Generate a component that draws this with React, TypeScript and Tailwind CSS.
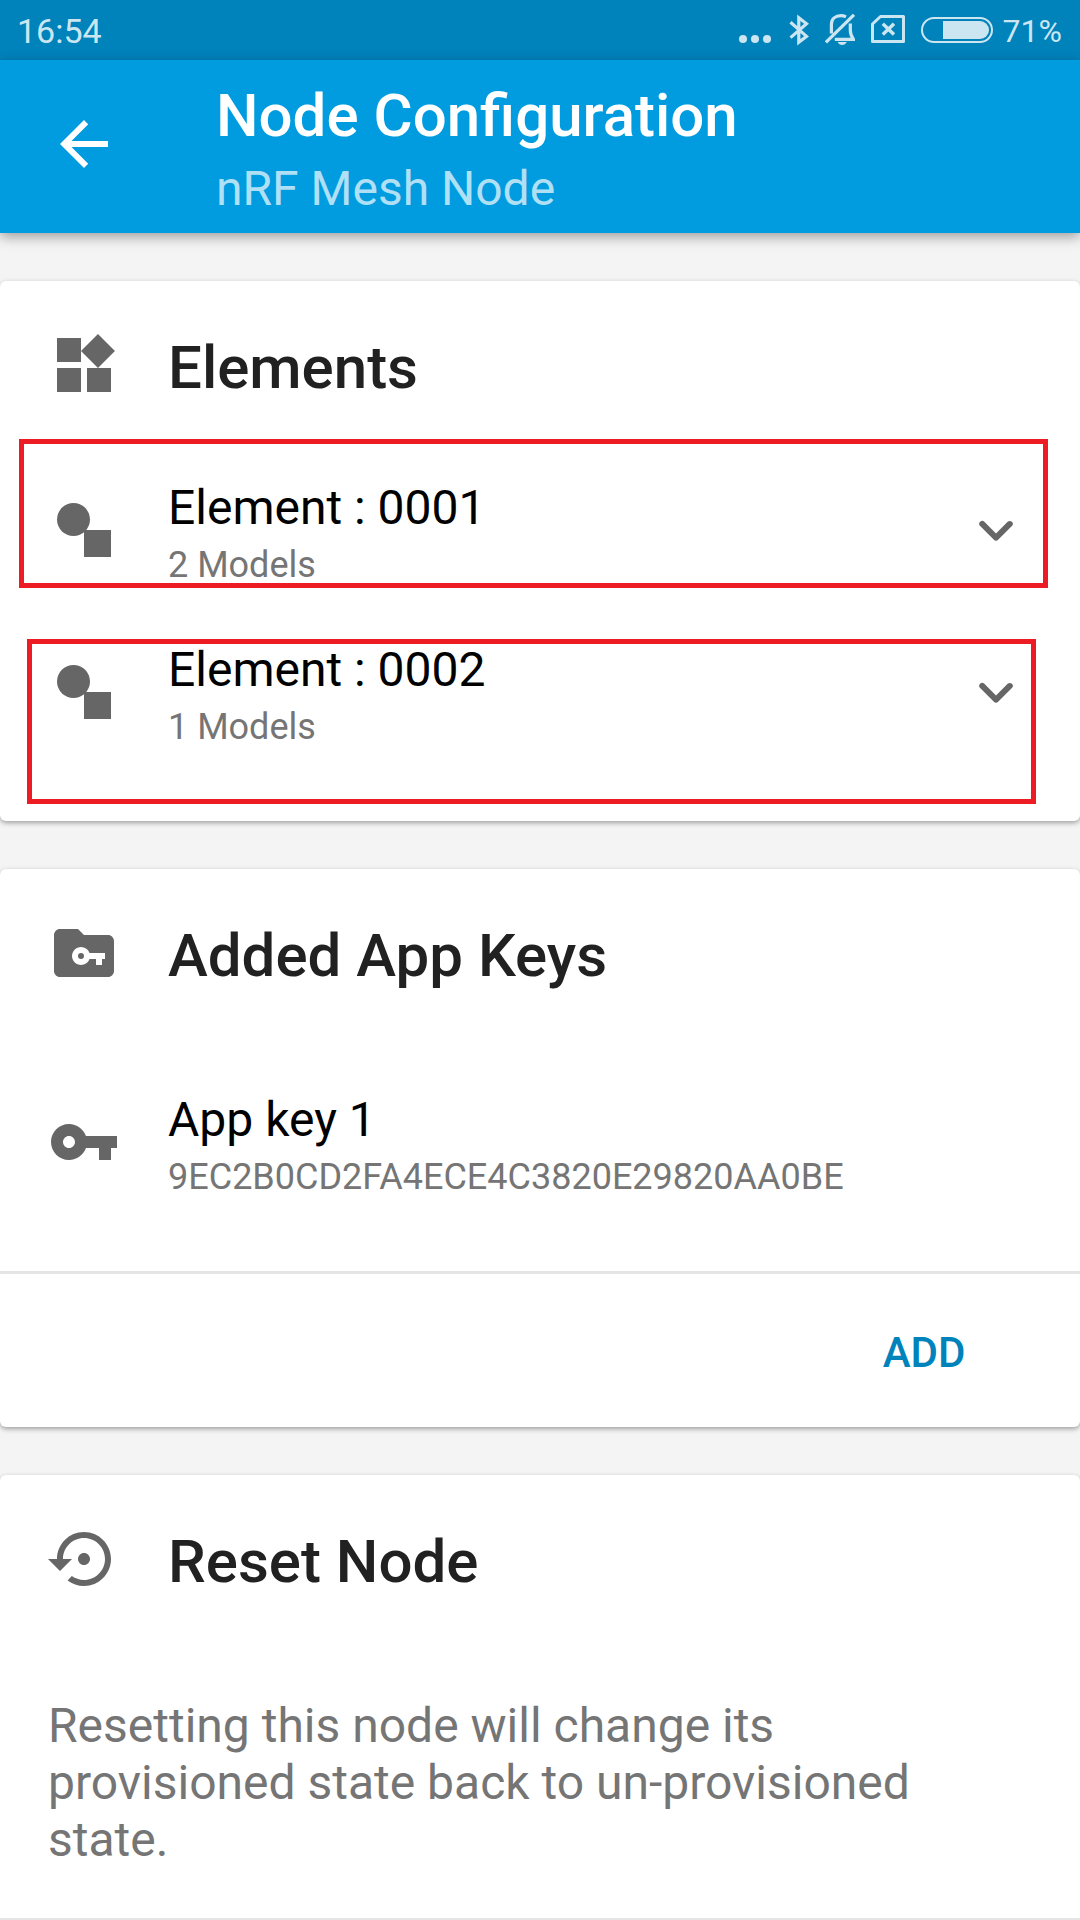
import type { ReactNode } from "react";

function Icon({ children }: { children: ReactNode }) {
  return (
    <svg viewBox="0 0 24 24" className="size-[72px] shrink-0" fill="currentColor" aria-hidden="true">
      {children}
    </svg>
  );
}

function StatusBar() {
  return (
    <div className="flex h-[60px] items-center justify-between bg-[#0082bb] pr-[18px] pl-[17px] text-[#cce6f1]">
      <span className="pt-0.5 text-[34px]">16:54</span>
      <div className="flex items-center gap-4">
        <svg width="34" height="32" viewBox="0 0 34 32" fill="currentColor" aria-hidden="true">
          <circle cx="4" cy="25" r="4" />
          <circle cx="16" cy="25" r="4" />
          <circle cx="28" cy="25" r="4" />
        </svg>
        <svg width="20" height="32" viewBox="0 0 20 32" fill="none" stroke="currentColor" strokeWidth="3.200" aria-hidden="true">
          <path d="M1.500 8.200 17.600 22.400 9.800 28.200V3.800L17.600 9.800 1.500 23.600" />
        </svg>
        <svg width="30" height="32" viewBox="0 0 30 32" fill="none" stroke="currentColor" strokeWidth="3.200" aria-hidden="true">
          <path d="M29 .8.9 28.400" />
          <path d="M6.400 19.600V10.400C6.400 5 10.500 1.700 16 1.700c2 0 3.600.5 5 1.200" />
          <path d="M25.300 9.500V16c0 3.600 1.200 6.800 3.200 9.400H9.800" />
          <path d="M12.600 28h9.200c-1 2-2.600 3-4.600 3s-3.600-1-4.600-3z" fill="currentColor" stroke="none" />
        </svg>
        <svg width="34" height="32" viewBox="0 0 34 32" fill="none" stroke="currentColor" strokeWidth="3" strokeLinejoin="round" aria-hidden="true">
          <path d="M9.500 2.500h23v25h-31V10z" />
          <path d="M11.800 9.800 23 20.400M23 9.800 11.800 20.400" strokeWidth="3.400" />
        </svg>
        <div className="flex items-center gap-2.5">
          <svg width="72" height="32" viewBox="0 0 72 32" aria-hidden="true">
            <rect x="1" y="4" width="70" height="24" rx="12" fill="none" stroke="currentColor" strokeWidth="2" />
            <path d="M22 7h37a9 9 0 0 1 0 18H22z" fill="currentColor" />
          </svg>
          <span className="pt-0.5 text-[32px]">71%</span>
        </div>
      </div>
    </div>
  );
}

function AppBar() {
  return (
    <header className="relative flex items-start bg-[#009cdf] pb-4 text-white shadow-[0_4px_12px_rgba(0,0,0,0.35)]">
      <button type="button" aria-label="Back" className="mt-12 ml-12">
        <Icon>
          <path d="M20 11H7.830l5.590-5.590L12 4l-8 8 8 8 1.410-1.410L7.830 13H20v-2z" />
        </Icon>
      </button>
      <div className="ml-24 pt-5">
        <h1 className="text-[60px] leading-[72px] font-medium">Node Configuration</h1>
        <p className="mt-[9px] text-[48px] leading-[56px] text-white/70">nRF Mesh Node</p>
      </div>
    </header>
  );
}

function Card({ title, icon, className = "", children }: { title: string; icon: ReactNode; className?: string; children: ReactNode }) {
  return (
    <section className={`bg-white shadow-[0_2px_5px_rgba(0,0,0,0.35)] ${className}`}>
      <div className="flex items-start gap-12 px-12 pt-12 text-[#666666]">
        <Icon>{icon}</Icon>
        <h2 className="text-[60px] leading-[78px] font-medium text-[#212121]">{title}</h2>
      </div>
      {children}
    </section>
  );
}

function RowBody({ icon, title, detail, trailing }: { icon: ReactNode; title: string; detail: string; trailing?: ReactNode }) {
  return (
    <span className="flex w-full items-start gap-12 px-12 py-7 text-left text-[#666666]">
      <span className="pt-3.5">
        <Icon>{icon}</Icon>
      </span>
      <span className="flex grow flex-col gap-2">
        <span className="text-[48px] leading-[56px] text-black">{title}</span>
        <span className="text-[36px] leading-[42px] text-[#757575]">{detail}</span>
      </span>
      {trailing && <span className="pt-3.5">{trailing}</span>}
    </span>
  );
}

const elements = [
  { title: "Element : 0001", detail: "2 Models", frame: "-top-[13px] bottom-[26px] left-[19px] right-8" },
  { title: "Element : 0002", detail: "1 Models", frame: "top-[25px] -bottom-7 left-[27px] right-11" },
];

export default function App() {
  return (
    <div className="bg-[#f4f4f4] font-[Roboto,sans-serif]">
      <StatusBar />
      <AppBar />
      <main className="flex flex-col gap-12 pt-12">
        <Card
          title="Elements"
          className="rounded-md"
          icon={<path d="M13 13v8h8v-8h-8zM3 21h8v-8H3v8zM3 3v8h8V3H3zm13.660-1.310L11 7.340 16.660 13l5.660-5.660-5.660-5.650z" />}
        >
          <ul className="pt-[45px] pb-[45px]">
            {elements.map((element) => (
              <li key={element.title} className="relative">
                <button type="button" aria-expanded="false" className="block w-full">
                  <RowBody
                    title={element.title}
                    detail={element.detail}
                    icon={
                      <>
                        <circle cx="8.500" cy="8.500" r="5.500" />
                        <path d="M12 12h9v9h-9z" />
                      </>
                    }
                    trailing={
                      <Icon>
                        <path d="M15.880 9.290 12 13.170 8.120 9.290a.996.996 0 1 0-1.410 1.410l4.590 4.590c.39.39 1.020.39 1.410 0l4.590-4.590a.996.996 0 0 0 0-1.410c-.39-.38-1.030-.39-1.420 0z" />
                      </Icon>
                    }
                  />
                </button>
                <span className={`pointer-events-none absolute border-[5px] border-[#ed1c24] ${element.frame}`} />
              </li>
            ))}
          </ul>
        </Card>

        <Card
          title="Added App Keys"
          className="rounded-md"
          icon={
            <path
              fillRule="evenodd"
              d="M10 4H4c-1.100 0-2 .9-2 2v12c0 1.100.9 2 2 2h16c1.100 0 2-.9 2-2V8c0-1.100-.9-2-2-2h-8l-2-2zM13.830 12H19v2h-1v2h-2v-2h-2.170a3 3 0 1 1 0-2zM11 12a1 1 0 1 0 0 2 1 1 0 0 0 0-2z"
            />
          }
        >
          <div className="pt-[69px] pb-[45px]">
            <RowBody
              title="App key 1"
              detail="9EC2B0CD2FA4ECE4C3820E29820AA0BE"
              icon={
                <path d="M12.650 10C11.830 7.670 9.610 6 7 6c-3.310 0-6 2.690-6 6s2.690 6 6 6c2.610 0 4.830-1.670 5.650-4H17v4h4v-4h2v-4H12.650zM7 14c-1.100 0-2-.9-2-2s.9-2 2-2 2 .9 2 2-.9 2-2 2z" />
              }
            />
          </div>
          <div className="flex justify-end border-t-3 border-[#e5e5e5] px-6 pt-6 pb-[21px]">
            <button type="button" className="h-[108px] w-[264px] text-[42px] font-medium text-[#0082bb]">
              ADD
            </button>
          </div>
        </Card>

        <Card
          title="Reset Node"
          className="rounded-t-md border-b-2 border-[#e5e5e5]"
          icon={
            <path d="M14 12c0-1.100-.9-2-2-2s-2 .9-2 2 .9 2 2 2 2-.9 2-2zm-2-9c-4.970 0-9 4.030-9 9H0l4 4 4-4H5c0-3.870 3.130-7 7-7s7 3.130 7 7-3.130 7-7 7c-1.510 0-2.910-.49-4.060-1.300l-1.420 1.440C8.040 20.300 9.940 21 12 21c4.970 0 9-4.030 9-9s-4.030-9-9-9z" />
          }
        >
          <p className="pt-24 pr-24 pb-[50px] pl-12 text-[48px] leading-[57px] text-[#757575]">
            Resetting this node will change its provisioned state back to un-provisioned state.
          </p>
        </Card>
      </main>
    </div>
  );
}
